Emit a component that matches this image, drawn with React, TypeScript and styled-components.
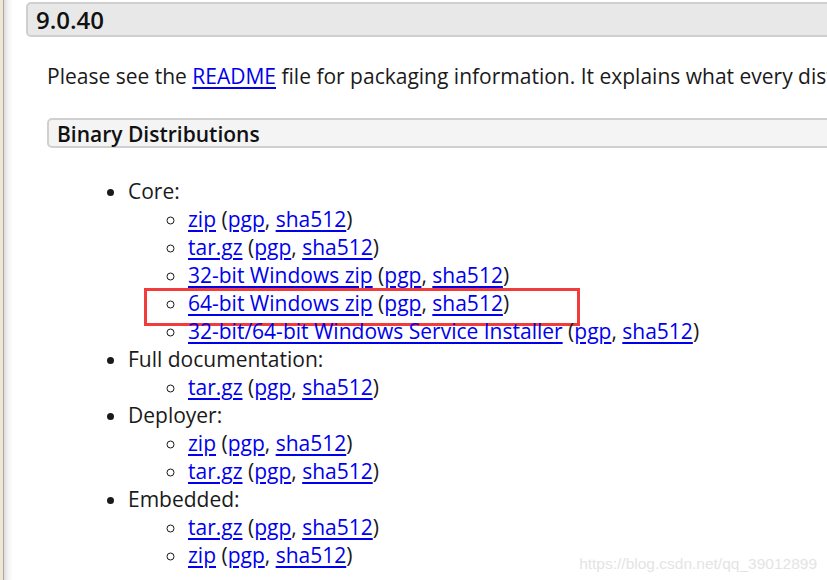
import React from "react";
import styled, { createGlobalStyle } from "styled-components";

const GlobalStyle = createGlobalStyle`
  html, body { margin: 0; padding: 0; background: #ffffff; }
  body {
    font-family: "Open Sans", "Noto Sans", sans-serif;
    color: #1a1a1a;
    overflow: hidden;
  }
`;

const Page = styled.div`
  display: flex;
  width: 827px;
  height: 580px;
  overflow: hidden;
  position: relative;
`;

const SideRail = styled.div`
  width: 3px;
  flex: none;
  background: #efe6d4;
  border-right: 1px solid #a8a8a8;
`;

const Main = styled.main`
  flex: 1;
  min-width: 0;
  padding: 2px 0 0 22px;
  background: linear-gradient(to right, #dcdcdc 0px, #f2f2f2 4px, #ffffff 9px);
  overflow: hidden;
`;

const VersionHeader = styled.h3`
  margin: 0 -20px 0 0;
  padding: 0 8px;
  border: 2px solid #cfcfcf;
  border-radius: 5px;
  background: #e8e8e8;
  font-size: 24px;
  font-weight: 600;
  line-height: 31px;
  color: #111;
`;

const Section = styled.section`
  padding-left: 21px;
`;

const Intro = styled.p`
  margin: 25px 0 0;
  font-size: 21px;
  line-height: 28px;
  white-space: nowrap;
`;

const SubHeader = styled.h4`
  margin: 28px -20px 0 0;
  padding: 2px 8px 0;
  border: 2px solid #d0d0d0;
  border-radius: 5px;
  background: #f4f4f4;
  font-size: 21px;
  font-weight: 600;
  line-height: 24px;
  color: #111;
`;

const Link = styled.a`
  color: #0000ee;
  text-decoration: underline;
  text-underline-offset: 3px;
`;

const TopList = styled.ul`
  margin: 29px 0 0;
  padding-left: 81px;
  list-style: disc;
  font-size: 21px;
  line-height: 28px;
`;

const SubList = styled.ul`
  margin: 0;
  padding-left: 60px;
  list-style: circle;
`;

const Item = styled.li`
  position: relative;
  white-space: nowrap;
`;

const Highlight = styled.span`
  position: absolute;
  left: -44px;
  top: -1px;
  width: 436px;
  height: 38px;
  box-sizing: border-box;
  border: 3px solid #f23b3b;
  pointer-events: none;
`;

const Watermark = styled.div`
  position: absolute;
  right: 10px;
  bottom: 7px;
  font-family: "Liberation Sans", Arial, sans-serif;
  font-size: 15.5px;
  color: #e4e4e4;
`;

type Dist = { label: string; highlight?: boolean };

const groups: { title: string; items: Dist[] }[] = [
  {
    title: "Core:",
    items: [
      { label: "zip" },
      { label: "tar.gz" },
      { label: "32-bit Windows zip" },
      { label: "64-bit Windows zip", highlight: true },
      { label: "32-bit/64-bit Windows Service Installer" },
    ],
  },
  { title: "Full documentation:", items: [{ label: "tar.gz" }] },
  { title: "Deployer:", items: [{ label: "zip" }, { label: "tar.gz" }] },
  { title: "Embedded:", items: [{ label: "tar.gz" }, { label: "zip" }] },
];

export default function App() {
  return (
    <>
      <GlobalStyle />
      <Page>
        <SideRail />
        <Main>
          <VersionHeader>9.0.40</VersionHeader>
          <Section>
            <Intro>
              Please see the <Link href="#">README</Link> file for packaging information. It explains what every distribution contains.
            </Intro>
            <SubHeader>Binary Distributions</SubHeader>
            <TopList>
              {groups.map((g) => (
                <Item key={g.title}>
                  {g.title}
                  <SubList>
                    {g.items.map((it, i) => (
                      <Item key={i}>
                        <Link href="#">{it.label}</Link> (<Link href="#">pgp</Link>, <Link href="#">sha512</Link>)
                        {it.highlight && <Highlight />}
                      </Item>
                    ))}
                  </SubList>
                </Item>
              ))}
            </TopList>
          </Section>
        </Main>
        <Watermark>https://blog.csdn.net/qq_39012899</Watermark>
      </Page>
    </>
  );
}
